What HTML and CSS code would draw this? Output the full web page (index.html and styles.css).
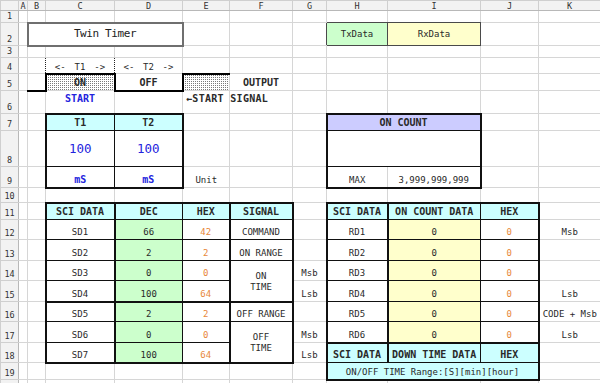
FILE: index.html
```html
<!DOCTYPE html>
<html>
<head>
<meta charset="utf-8">
<link rel="stylesheet" href="styles.css">
</head>
<body>
<table class="sheet">
<colgroup>
<col class="w-rh"><col class="w-a"><col class="w-b"><col class="w-c"><col class="w-d"><col class="w-e"><col class="w-f"><col class="w-g"><col class="w-h"><col class="w-i"><col class="w-j"><col class="w-k">
</colgroup>
<tr class="hdr"><th class="corner"></th><th>A</th><th>B</th><th>C</th><th>D</th><th>E</th><th>F</th><th>G</th><th>H</th><th>I</th><th>J</th><th>K</th></tr>
<tr class="r1"><th class="rn">1</th><td></td><td></td><td></td><td></td><td></td><td></td><td></td><td class="tx-top"></td><td class="tx-top"></td><td></td><td></td></tr>
<tr class="r2"><th class="rn">2</th><td></td><td colspan="3" class="title">Twin Timer</td><td></td><td></td><td class="tx-left"></td><td class="box gr">TxData</td><td class="box yl">RxData</td><td></td><td></td></tr>
<tr class="r3"><th class="rn">3</th><td></td><td></td><td></td><td></td><td></td><td></td><td></td><td></td><td></td><td></td><td></td></tr>
<tr class="r4"><th class="rn">4</th><td></td><td class="dr"></td><td class="dot"><div class="arrows"><span>&lt;-</span><span>T1</span><span>-&gt;</span></div></td><td class="dot"><div class="arrows"><span>&lt;-</span><span>T2</span><span>-&gt;</span></div></td><td></td><td></td><td></td><td></td><td></td><td></td><td></td></tr>
<tr class="r5"><th class="rn">5</th><td></td><td class="wb"></td><td class="won b">ON</td><td class="woff b">OFF</td><td class="won2"></td><td class="b">OUTPUT</td><td></td><td></td><td></td><td></td><td></td></tr>
<tr class="r6"><th class="rn">6</th><td></td><td></td><td class="b blue top">START</td><td></td><td class="b top left sig">&larr;START SIGNAL</td><td></td><td></td><td></td><td></td><td></td><td></td></tr>
<tr class="r7"><th class="rn">7</th><td></td><td></td><td class="t tT tL cy b">T1</td><td class="t tT tR cy b">T2</td><td></td><td></td><td></td><td colspan="2" class="t tT tL tR lv b">ON COUNT</td><td></td><td></td></tr>
<tr class="r8"><th class="rn">8</th><td></td><td></td><td class="t tL big blue">100</td><td class="t tR big blue">100</td><td></td><td></td><td></td><td colspan="2" class="t tL tR"></td><td></td><td></td></tr>
<tr class="r9"><th class="rn">9</th><td></td><td></td><td class="t tL tB b blue">mS</td><td class="t tR tB b blue">mS</td><td>Unit</td><td></td><td></td><td class="t tL tB gr-r">MAX</td><td class="t tR tB gr-l">3,999,999,999</td><td></td><td></td></tr>
<tr class="r10"><th class="rn">10</th><td></td><td></td><td></td><td></td><td></td><td></td><td></td><td></td><td></td><td></td><td></td></tr>
<tr class="r11"><th class="rn">11</th><td></td><td></td><td class="t tT tL tR cy b">SCI DATA</td><td class="t tT cy b">DEC</td><td class="t tT tR cy b">HEX</td><td class="t tT tR cy b">SIGNAL</td><td></td><td class="t tT tL tR cy b">SCI DATA</td><td class="t tT cy b">ON COUNT DATA</td><td class="t tT tR cy b">HEX</td><td></td></tr>
<tr class="r12"><th class="rn">12</th><td></td><td></td><td class="t tL tR">SD1</td><td class="t gr">66</td><td class="t tR or">42</td><td class="t tR">COMMAND</td><td></td><td class="t tL tR">RD1</td><td class="t yl">0</td><td class="t tR or">0</td><td>Msb</td></tr>
<tr class="r13"><th class="rn">13</th><td></td><td></td><td class="t tL tR">SD2</td><td class="t gr">2</td><td class="t tR or">2</td><td class="t tR">ON RANGE</td><td></td><td class="t tL tR">RD2</td><td class="t yl">0</td><td class="t tR or">0</td><td></td></tr>
<tr class="r14"><th class="rn">14</th><td></td><td></td><td class="t tL tR">SD3</td><td class="t gr">0</td><td class="t tR or">0</td><td rowspan="2" class="t tR tB two">ON<br>TIME</td><td>Msb</td><td class="t tL tR">RD3</td><td class="t yl">0</td><td class="t tR or">0</td><td></td></tr>
<tr class="r15"><th class="rn">15</th><td></td><td></td><td class="t tL tR tB">SD4</td><td class="t tB gr">100</td><td class="t tR tB or">64</td><td>Lsb</td><td class="t tL tR">RD4</td><td class="t yl">0</td><td class="t tR or">0</td><td>Lsb</td></tr>
<tr class="r16"><th class="rn">16</th><td></td><td></td><td class="t tL tR">SD5</td><td class="t gr">2</td><td class="t tR or">2</td><td class="t tR">OFF RANGE</td><td></td><td class="t tL tR">RD5</td><td class="t yl">0</td><td class="t tR or">0</td><td>CODE + Msb</td></tr>
<tr class="r17"><th class="rn">17</th><td></td><td></td><td class="t tL tR">SD6</td><td class="t gr">0</td><td class="t tR or">0</td><td rowspan="2" class="t tR tB two">OFF<br>TIME</td><td>Msb</td><td class="t tL tR tB">RD6</td><td class="t tB yl">0</td><td class="t tR tB or">0</td><td>Lsb</td></tr>
<tr class="r18"><th class="rn">18</th><td></td><td></td><td class="t tL tR tB">SD7</td><td class="t tB gr">100</td><td class="t tR tB or">64</td><td>Lsb</td><td class="t tL tR cy b">SCI DATA</td><td class="t cy b">DOWN TIME DATA</td><td class="t tR cy b">HEX</td><td></td></tr>
<tr class="r19"><th class="rn">19</th><td></td><td></td><td></td><td></td><td></td><td></td><td></td><td colspan="3" class="t tL tR tB cy">ON/OFF TIME Range:[S][min][hour]</td><td></td></tr>
<tr class="r20"><th class="rn"></th><td></td><td></td><td></td><td></td><td></td><td></td><td></td><td></td><td></td><td></td><td></td></tr>
</table>
</body>
</html>
```

FILE: styles.css
```css
html, body {
  margin: 0;
  padding: 0;
  background: #fff;
  overflow: hidden;
}

.sheet {
  border-collapse: collapse;
  table-layout: fixed;
  width: 600px;
  font-family: "DejaVu Sans Mono", "Liberation Mono", monospace;
  font-size: 9px;
  color: #2a2a2a;
}

.w-rh { width: 18px; }
.w-a { width: 9px; }
.w-b { width: 18px; }
.w-c { width: 69px; }
.w-d { width: 68px; }
.w-e { width: 47px; }
.w-f { width: 63px; }
.w-g { width: 34px; }
.w-h { width: 61px; }
.w-i { width: 93px; }
.w-j { width: 58px; }
.w-k { width: 62px; }

.sheet td,
.sheet th {
  border: 1px solid #d6d6d6;
  padding: 0 0 2px 0;
  text-align: center;
  vertical-align: bottom;
  white-space: nowrap;
  overflow: visible;
  line-height: 10px;
  font-weight: normal;
}

.sheet th {
  background: #f2f2f2;
  color: #333;
  font-size: 8.5px;
  line-height: 9px;
  border-color: #cfcfcf;
}

.sheet .hdr th {
  vertical-align: middle;
  padding: 0;
  line-height: 8px;
  border-bottom-color: #b8b8b8;
}

.sheet th.rn {
  padding-bottom: 1px;
  border-right-color: #b8b8b8;
}

.hdr { height: 10px; }
.r1 { height: 12px; }
.r2 { height: 23px; }
.r3 { height: 12px; }
.r4 { height: 16px; }
.r5 { height: 17px; }
.r6 { height: 23px; }
.r7 { height: 17px; }
.r8 { height: 36px; }
.r9 { height: 21px; }
.r10 { height: 15px; }
.r11 { height: 17px; }
.r12 { height: 20px; }
.r13 { height: 21px; }
.r14 { height: 20px; }
.r15 { height: 21px; }
.r16 { height: 20px; }
.r17 { height: 21px; }
.r18 { height: 20px; }
.r19 { height: 17px; }
.r20 { height: 17px; }

/* text styles */
.sheet td.b { font-weight: bold; font-size: 10px; }
.sheet td.blue { color: #2323dd; }
.sheet td.or { color: #e8873a; }
.sheet td.big { font-size: 12.5px; vertical-align: middle; padding: 0; }
.sheet td.top { vertical-align: top; padding: 3px 0 0 0; }
.sheet td.left { text-align: left; }
.sheet td.sig { padding-left: 3px; letter-spacing: 0.3px; }
.sheet td.two { vertical-align: middle; padding: 2px 0 0 0; line-height: 11px; }

/* fills */
.cy { background: #ccffff; }
.lv { background: #ccccff; }
.gr { background: #ccffcc; }
.yl { background: #ffffcc; }

/* title box */
.sheet td.title {
  border: 2px solid #6f6f6f;
  font-size: 11px;
  letter-spacing: -0.4px;
  vertical-align: middle;
  padding: 0;
  color: #222;
}

/* TxData / RxData boxes */
.sheet td.box { border: 1px solid #4a4a4a; vertical-align: middle; padding: 0; }
.sheet td.tx-top { border-bottom-color: #4a4a4a; }
.sheet td.tx-left { border-right-color: #4a4a4a; }

/* T1 / T2 arrows */
.sheet td.dr { border-right: 1px dotted #222; }
.sheet td.dot { border-left: 1px dotted #222; border-right: 1px dotted #222; padding-bottom: 1px; }
.arrows {
  display: flex;
  justify-content: space-evenly;
}

/* waveform */
.sheet td.wb { border-bottom: 2px solid #000; }
.sheet td.won,
.sheet td.won2 {
  background-color: #fff;
  background-image: conic-gradient(#7a7a7a 0 25%, transparent 0);
  background-size: 2px 2px;
  border-top: 2px solid #000;
  border-left: 2px solid #000;
}
.sheet td.won { border-right: 2px solid #000; }
.sheet td.woff { border-bottom: 2px solid #000; }

/* data tables */
.sheet td.t { border: 1px solid #111; }
.sheet td.tT { border-top-width: 2px; }
.sheet td.tB { border-bottom-width: 2px; }
.sheet td.tL { border-left-width: 2px; }
.sheet td.tR { border-right-width: 2px; }
.sheet td.gr-r { border-right-color: #d6d6d6; }
.sheet td.gr-l { border-left-color: #d6d6d6; }
```
